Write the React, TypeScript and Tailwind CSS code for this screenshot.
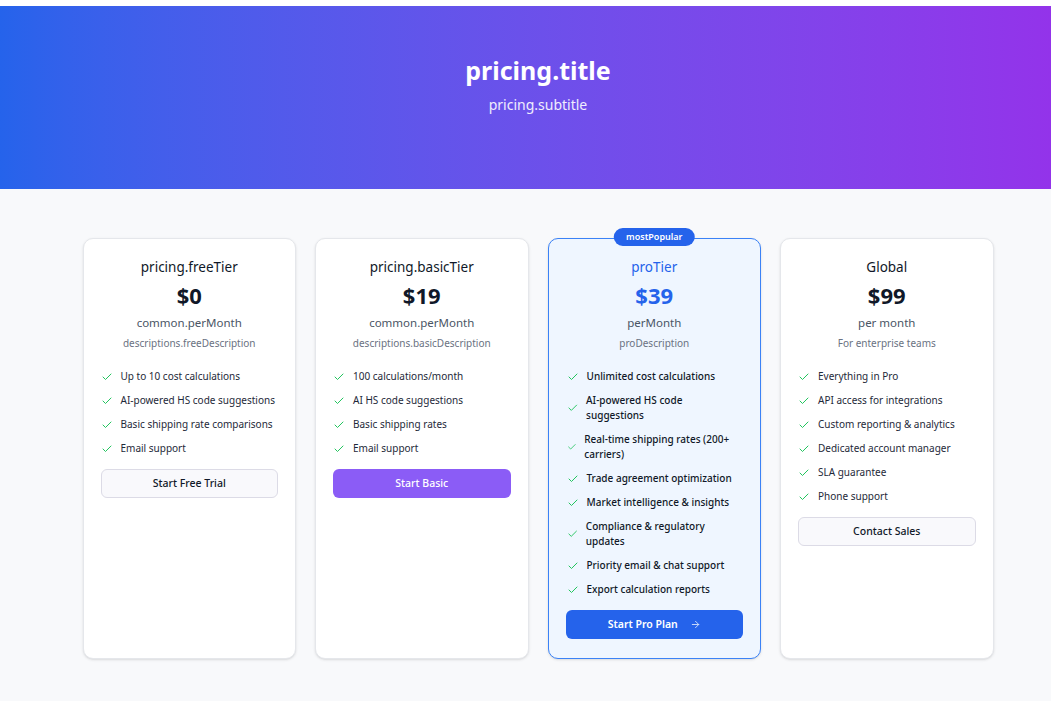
import { Check, ArrowRight } from "lucide-react";

type Plan = {
  name: string;
  price: string;
  period: string;
  description: string;
  features: string[];
  cta: string;
  variant: "outline" | "violet" | "blue";
  popular?: boolean;
};

const plans: Plan[] = [
  {
    name: "pricing.freeTier",
    price: "$0",
    period: "common.perMonth",
    description: "descriptions.freeDescription",
    features: [
      "Up to 10 cost calculations",
      "AI-powered HS code suggestions",
      "Basic shipping rate comparisons",
      "Email support",
    ],
    cta: "Start Free Trial",
    variant: "outline",
  },
  {
    name: "pricing.basicTier",
    price: "$19",
    period: "common.perMonth",
    description: "descriptions.basicDescription",
    features: ["100 calculations/month", "AI HS code suggestions", "Basic shipping rates", "Email support"],
    cta: "Start Basic",
    variant: "violet",
  },
  {
    name: "proTier",
    price: "$39",
    period: "perMonth",
    description: "proDescription",
    features: [
      "Unlimited cost calculations",
      "AI-powered HS code suggestions",
      "Real-time shipping rates (200+ carriers)",
      "Trade agreement optimization",
      "Market intelligence & insights",
      "Compliance & regulatory updates",
      "Priority email & chat support",
      "Export calculation reports",
    ],
    cta: "Start Pro Plan",
    variant: "blue",
    popular: true,
  },
  {
    name: "Global",
    price: "$99",
    period: "per month",
    description: "For enterprise teams",
    features: [
      "Everything in Pro",
      "API access for integrations",
      "Custom reporting & analytics",
      "Dedicated account manager",
      "SLA guarantee",
      "Phone support",
    ],
    cta: "Contact Sales",
    variant: "outline",
  },
];

const buttonStyles = {
  outline: "border border-[#dcdbe6] bg-[#f9f9fc] text-gray-900 font-medium",
  violet: "bg-[#8b5cf6] text-white font-medium",
  blue: "bg-[#2563eb] text-white font-semibold",
};

function PlanCard({ plan }: { plan: Plan }) {
  const pro = !!plan.popular;
  return (
    <div
      className={`relative rounded-[10px] border px-[17px] pt-[18px] pb-[19px] shadow-sm ${
        pro ? "border-[#3b82f6] bg-[#eff6ff]" : "border-gray-200 bg-white"
      }`}
    >
      {pro && (
        <span className="absolute -top-[11px] left-1/2 -translate-x-1/2 h-[18px] px-3 flex items-center rounded-full bg-[#2563eb] text-white text-[9px] font-semibold">
          mostPopular
        </span>
      )}
      <div className="text-center">
        <h3 className={`text-[13.5px] leading-[20px] ${pro ? "text-[#2563eb]" : "text-gray-900"}`}>{plan.name}</h3>
        <p className={`mt-1 text-[22px] leading-[28px] font-bold ${pro ? "text-[#2563eb]" : "text-gray-900"}`}>
          {plan.price}
        </p>
        <p className="mt-[6px] text-[11.5px] leading-[16px] text-gray-600">{plan.period}</p>
        <p className="mt-[5px] text-[10px] leading-[14px] text-gray-500">{plan.description}</p>
      </div>
      <ul className={`mt-[19px] flex flex-col gap-[9px] ${pro ? "pl-px pr-[6px]" : ""}`}>
        {plan.features.map((f) => (
          <li key={f} className="flex items-center gap-2">
            <Check size={12} strokeWidth={2} className="text-[#22c55e]" />
            <span className={`text-[10px] leading-[15px] ${pro ? "text-gray-900 font-medium" : "text-gray-800"}`}>{f}</span>
          </li>
        ))}
      </ul>
      <button
        className={`mt-[13px] w-full h-[29px] rounded-md text-[10.5px] flex items-center justify-center gap-3 ${buttonStyles[plan.variant]}`}
      >
        {plan.cta}
        {pro && <ArrowRight size={11} strokeWidth={2} className="opacity-80" />}
      </button>
    </div>
  );
}

export default function App() {
  return (
    <div className="min-h-[701px] bg-[#f8f9fb] font-['Noto_Sans',sans-serif]">
      <div className="bg-white h-[6px]" />
      <header className="bg-gradient-to-r from-[#2563eb] to-[#9333ea] pt-[48px] pb-[74px] pl-[25px] text-center text-white">
        <h1 className="text-[25px] leading-[32px] font-bold">pricing.title</h1>
        <p className="mt-[9px] text-[14px] leading-[20px] text-white/90">pricing.subtitle</p>
      </header>
      <main className="pt-[49px] pb-12 pl-[25px]">
        <div className="mx-auto w-[911px] grid grid-cols-4 gap-[19px]">
          {plans.map((p) => (
            <PlanCard key={p.name} plan={p} />
          ))}
        </div>
      </main>
    </div>
  );
}
